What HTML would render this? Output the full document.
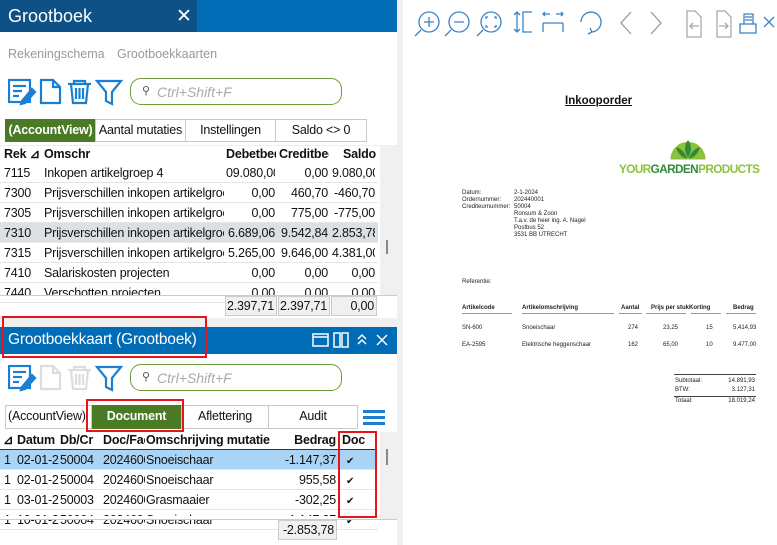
<!DOCTYPE html>
<html><head><meta charset="utf-8"><style>
*{margin:0;padding:0;box-sizing:border-box}
body{width:777px;height:545px;overflow:hidden;background:#fff;font-family:"Liberation Sans",sans-serif;position:relative;font-size:12px;color:#111}
.a{position:absolute;white-space:nowrap}
.cell{position:absolute;white-space:nowrap;overflow:hidden;font-size:12.5px;letter-spacing:-0.2px;line-height:20px}
.r{text-align:right}
.tab{position:absolute;border:1px solid #c8c8c8;background:#fff;text-align:center;font-size:12.5px;letter-spacing:-0.2px;line-height:21px;white-space:nowrap;overflow:hidden}
.red{position:absolute;border:2px solid #e8141b}
.s{font-size:6px;color:#222}
</style></head><body>
<div class="a" style="left:0;top:0;width:397px;height:32px;background:#006cb6"></div>
<div class="a" style="left:0;top:0;width:197px;height:32px;background:#0d5186"></div>
<div class="a" style="left:8px;top:6px;font-size:18px;color:#fff">Grootboek</div>
<div class="a" style="left:176px;top:5px;font-size:19px;color:#fff">✕</div>
<div class="a" style="left:8px;top:47px;font-size:12.5px;color:#999">Rekeningschema</div>
<div class="a" style="left:117px;top:47px;font-size:12.5px;color:#999">Grootboekkaarten</div>

<svg class="a" style="left:8px;top:78px" width="120" height="28" viewBox="0 0 120 28" fill="none" stroke="#1a7fd4" stroke-width="2.2">
<rect x="1" y="2" width="21" height="22"/><line x1="5" y1="8" x2="18" y2="8"/><line x1="5" y1="13" x2="14" y2="13"/><line x1="5" y1="18" x2="11" y2="18"/><path d="M14 23 L24 11 L27 14 L17 25 L13 26Z" fill="#1a7fd4"/>
<path d="M33 2 H45 L52 9 V25 H33Z"/><path d="M45 2 V9 H52"/>
<path d="M60 6 H83 M66 6 V3 H77 V6 M63 6 L65 25 H78 L80 6 M68 10 V21 M71.5 10 V21 M75 10 V21"/>
<path d="M89 3 H113 L104 14 V26 L98 23 V14Z"/>
</svg>
<div class="a" style="left:130px;top:78px;width:212px;height:27px;border:1.5px solid #6f9a3a;border-radius:11px"></div>
<div class="a" style="left:142px;top:84px;font-size:11px;color:#555">&#9906;</div>
<div class="a" style="left:157px;top:84px;font-size:14px;font-style:italic;color:#aaa">Ctrl+Shift+F</div>

<div class="tab" style="left:5px;top:119px;width:91px;height:23px;background:#4a7a23;color:#fff;font-weight:bold;border-color:#4a7a23">(AccountView)</div>
<div class="tab" style="left:95px;top:119px;width:91px;height:23px">Aantal mutaties</div>
<div class="tab" style="left:185px;top:119px;width:91px;height:23px">Instellingen</div>
<div class="tab" style="left:275px;top:119px;width:92px;height:23px">Saldo &lt;&gt; 0</div>

<div class="a" style="left:0;top:145px;width:397px;height:1px;background:#eee"></div>
<div class="a" style="left:380px;top:146px;width:17px;height:150px;background:#f0f0f0"></div>
<div class="a" style="left:386px;top:240px;width:2px;height:14px;background:#888"></div>
<div class="a" style="left:0;top:223px;width:378px;height:20px;background:#dcdfe3"></div>
<div id="g1"></div>
<div class="a" style="left:0;top:295px;width:397px;height:1px;background:#ccc"></div>
<div class="a" style="left:225px;top:296px;width:52px;height:20px;background:#f0f0f0;border:1px solid #ccc"></div>
<div class="a" style="left:278px;top:296px;width:52px;height:20px;background:#f0f0f0;border:1px solid #ccc"></div>
<div class="a" style="left:331px;top:296px;width:46px;height:20px;background:#f0f0f0;border:1px solid #ccc"></div>
<div class="cell r" style="left:226px;top:296px;width:48px">2.397,71</div>
<div class="cell r" style="left:279px;top:296px;width:48px">2.397,71</div>
<div class="cell r" style="left:332px;top:296px;width:42px">0,00</div>
<div class="a" style="left:0;top:318px;width:397px;height:9px;background:#f0f0f0"></div>

<div class="a" style="left:0;top:327px;width:397px;height:27px;background:#006cb6"></div>
<div class="a" style="left:8px;top:331px;font-size:15.5px;letter-spacing:-0.2px;color:#fff">Grootboekkaart (Grootboek)</div>
<svg class="a" style="left:311px;top:330px" width="86" height="20" viewBox="0 0 86 20" fill="none" stroke="#fff" stroke-width="1.5">
<rect x="2" y="4" width="15" height="12"/><line x1="2" y1="7" x2="17" y2="7"/>
<rect x="23" y="3" width="6" height="14"/><rect x="31" y="3" width="6" height="14"/>
<path d="M47 9 L51 5 L55 9 M47 14 L51 10 L55 14"/>
<path d="M66 5 L76 15 M76 5 L66 15"/>
</svg>
<div class="red" style="left:2px;top:316px;width:205px;height:42px"></div>
<svg class="a" style="left:8px;top:364px" width="120" height="28" viewBox="0 0 120 28" fill="none" stroke-width="2.2">
<g stroke="#1a7fd4"><rect x="1" y="2" width="21" height="22"/><line x1="5" y1="8" x2="18" y2="8"/><line x1="5" y1="13" x2="14" y2="13"/><line x1="5" y1="18" x2="11" y2="18"/><path d="M14 23 L24 11 L27 14 L17 25 L13 26Z" fill="#1a7fd4"/></g>
<g stroke="#ddd"><path d="M33 2 H45 L52 9 V25 H33Z"/><path d="M45 2 V9 H52"/>
<path d="M60 6 H83 M66 6 V3 H77 V6 M63 6 L65 25 H78 L80 6 M68 10 V21 M71.5 10 V21 M75 10 V21"/></g>
<path stroke="#1a7fd4" d="M89 3 H113 L104 14 V26 L98 23 V14Z"/>
</svg>
<div class="a" style="left:130px;top:364px;width:212px;height:27px;border:1.5px solid #6f9a3a;border-radius:11px"></div>
<div class="a" style="left:142px;top:370px;font-size:11px;color:#555">&#9906;</div>
<div class="a" style="left:157px;top:370px;font-size:14px;font-style:italic;color:#aaa">Ctrl+Shift+F</div>

<div class="tab" style="left:5px;top:405px;width:87px;height:24px;text-align:left;padding-left:2px">(AccountView)</div>
<div class="tab" style="left:92px;top:405px;width:89px;height:24px;background:#4a7a23;color:#fff;font-weight:bold;border-color:#4a7a23">Document</div>
<div class="tab" style="left:181px;top:405px;width:88px;height:24px">Aflettering</div>
<div class="tab" style="left:268px;top:405px;width:90px;height:24px">Audit</div>
<div class="red" style="left:86px;top:399px;width:98px;height:33px"></div>
<div class="a" style="left:363px;top:410px;width:22px;height:3px;background:#1a7fd4"></div>
<div class="a" style="left:363px;top:416px;width:22px;height:3px;background:#1a7fd4"></div>
<div class="a" style="left:363px;top:422px;width:22px;height:3px;background:#1a7fd4"></div>

<div class="a" style="left:380px;top:432px;width:17px;height:88px;background:#f0f0f0"></div>
<div class="a" style="left:386px;top:449px;width:2px;height:16px;background:#888"></div>
<div class="a" style="left:0;top:450px;width:376px;height:20px;background:#aad4f5"></div>
<div class="a" style="left:0;top:449px;width:376px;height:1px;background:#333"></div>
<div id="g2"></div>
<div class="a" style="left:0;top:519px;width:397px;height:1px;background:#ccc"></div>
<div class="a" style="left:278px;top:520px;width:59px;height:20px;background:#f0f0f0;border:1px solid #ccc"></div>
<div class="cell r" style="left:279px;top:520px;width:55px">-2.853,78</div>
<div class="red" style="left:338px;top:431px;width:39px;height:87px"></div>

<div class="a" style="left:397px;top:0;width:6px;height:545px;background:#f0f0f0"></div>

<svg class="a" style="left:414px;top:8px" width="363" height="30" viewBox="0 0 363 30" fill="none" stroke="#3a82c4" stroke-width="1.3">
<circle cx="15" cy="14" r="10"/><path d="M7 22 L1 28 M10 14 H20 M15 9 V19"/>
<circle cx="45" cy="14" r="10"/><path d="M37 22 L31 28 M40 14 H50"/>
<circle cx="77" cy="14" r="10"/><path d="M69 22 L63 28 M72 11 V9 H74 M80 9 H82 V11 M82 17 V19 H80 M74 19 H72 V17"/>
<path d="M103 4 V24 M100 7 L103 4 L106 7 M100 21 L103 24 L106 21 M118 4 H109 V24 H118"/>
<path d="M129 15 V24 M149 15 V24 M129 15 H149 M129 6 H136 M142 6 H149 M131 4 L129 6 L131 8 M147 4 L149 6 L147 8"/>
<path d="M178 24 A10 10 0 1 0 167 14 M176 20 L178 24 L174 26" />
<path stroke="#999" d="M217 4 L207 15 L217 26 M237 4 L247 15 L237 26"/>
<path stroke="#aaa" d="M273 3 H281 L287 9 V29 H273Z M285 18 H277 M279 15 L276 18 L279 21"/>
<path stroke="#aaa" d="M303 3 H311 L317 9 V29 H303Z M305 18 H313 M311 15 L314 18 L311 21"/>
<path d="M326 16 H342 V25 H326Z M330 16 V6 H339 V16 M331 9 H338 M331 12 H338"/>
<path d="M350 9 L360 19 M360 9 L350 19"/>
</svg>

<div class="a" style="left:565px;top:95px;font-size:11.5px;font-weight:bold;text-decoration:underline">Inkooporder</div>
<svg class="a" style="left:666px;top:134px" width="44" height="28" viewBox="0 0 50 30"><path d="M5 28 A20 20 0 0 1 45 28Z" fill="#8cc23b"/><path d="M25 6 C20 12 21 20 25 26 C29 20 30 12 25 6Z M12 14 C12 20 18 26 24 27 C22 21 18 16 12 14Z M38 14 C38 20 32 26 26 27 C28 21 32 16 38 14Z" fill="#2f8a3a"/></svg>
<div class="a" style="left:619px;top:162px;font-size:12px;font-weight:bold;letter-spacing:-0.6px;color:#8cc23b;transform:scaleX(0.98);transform-origin:left">YOUR<span style="color:#2f8a3a">GARDEN</span>PRODUCTS</div>
<div class="a s" style="left:462px;top:190px;line-height:7px">Datum:<br>Ordernummer:<br>Crediteurnummer:</div>
<div class="a s" style="left:514px;top:190px;line-height:7px">2-1-2024<br>202440001<br>50004<br>Ronsum &amp; Zoon<br>T.a.v. de heer ing. A. Nagel<br>Postbus 52<br>3531 BB UTRECHT</div>
<div class="a s" style="left:462px;top:279px">Referentie:</div>
<div class="a s" style="left:462px;top:305px;font-weight:bold">Artikelcode</div>
<div class="a s" style="left:522px;top:305px;font-weight:bold">Artikelomschrijving</div>
<div class="a s" style="left:621px;top:305px;font-weight:bold">Aantal</div>
<div class="a s" style="left:651px;top:305px;font-weight:bold">Prijs per stukKorting</div>
<div class="a s" style="left:733px;top:305px;font-weight:bold">Bedrag</div>
<div class="a" style="left:462px;top:313px;width:50px;height:1px;background:#999"></div>
<div class="a" style="left:522px;top:313px;width:92px;height:1px;background:#999"></div>
<div class="a" style="left:619px;top:313px;width:23px;height:1px;background:#999"></div>
<div class="a" style="left:646px;top:313px;width:40px;height:1px;background:#999"></div>
<div class="a" style="left:691px;top:313px;width:30px;height:1px;background:#999"></div>
<div class="a" style="left:726px;top:313px;width:30px;height:1px;background:#999"></div>
<div class="a s" style="left:462px;top:325px">SN-600</div><div class="a s" style="left:522px;top:325px">Snoeischaar</div><div class="a s" style="left:628px;top:325px">274</div><div class="a s" style="left:663px;top:325px">23,25</div><div class="a s" style="left:706px;top:325px">15</div><div class="a s" style="left:733px;top:325px">5.414,93</div>
<div class="a s" style="left:462px;top:342px">EA-2595</div><div class="a s" style="left:522px;top:342px">Elektrische heggenschaar</div><div class="a s" style="left:628px;top:342px">162</div><div class="a s" style="left:663px;top:342px">65,00</div><div class="a s" style="left:706px;top:342px">10</div><div class="a s" style="left:733px;top:342px">9.477,00</div>
<div class="a" style="left:674px;top:374px;width:82px;height:1px;background:#444"></div>
<div class="a s" style="left:675px;top:377px;line-height:9px">Subtotaal:<br>BTW:</div>
<div class="a s r" style="left:715px;top:377px;width:40px;line-height:9px">14.891,93<br>3.127,31</div>
<div class="a" style="left:674px;top:396px;width:82px;height:1px;background:#444"></div>
<div class="a s" style="left:675px;top:398px">Totaal:</div>
<div class="a s r" style="left:715px;top:398px;width:40px">18.019,24</div>

<script>
function row(par,top,cells,bold){var h='';cells.forEach(function(c){h+='<div class="cell'+(c[3]?' r':'')+'" style="left:'+c[0]+'px;top:'+top+'px;width:'+c[1]+'px;'+(bold?'font-weight:bold;':'')+'">'+c[2]+'</div>';});par.insertAdjacentHTML('beforeend',h);}
var g1=document.getElementById('g1');
row(g1,144,[[4,36,'Rek ⊿'],[44,180,'Omschr'],[226,50,'Debetbedrag'],[279,50,'Creditbedrag'],[332,44,'Saldo',1]],1);
var d=[['7115','Inkopen artikelgroep 4','09.080,00','0,00','9.080,00'],['7300','Prijsverschillen inkopen artikelgroep','0,00','460,70','-460,70'],['7305','Prijsverschillen inkopen artikelgroep','0,00','775,00','-775,00'],['7310','Prijsverschillen inkopen artikelgroep','6.689,06','9.542,84','2.853,78'],['7315','Prijsverschillen inkopen artikelgroep','5.265,00','9.646,00','4.381,00'],['7410','Salariskosten projecten','0,00','0,00','0,00'],['7440','Verschotten projecten','0,00','0,00','0,00']];
d.forEach(function(r,i){var t=163+i*20;row(g1,t,[[4,36,r[0]],[44,180,r[1]],[226,49,r[2],1],[279,49,r[3],1],[332,43,r[4],1]]);
g1.insertAdjacentHTML('beforeend','<div class="a" style="left:0;top:'+(t+19)+'px;width:378px;height:1px;background:#e6e6e6"></div>');});
g1.insertAdjacentHTML('beforeend','<div class="a" style="left:0;top:296px;width:380px;height:6px;background:#fff"></div>');
var g2=document.getElementById('g2');
row(g2,430,[[3,12,'⊿'],[17,42,'Datum ⊿'],[60,42,'Db/Cr'],[103,42,'Doc/Factuur'],[146,130,'Omschrijving mutatie'],[280,56,'Bedrag',1],[342,30,'Doc']],1);
var e=[['02-01-2','50004','Snoeischaar','-1.147,37'],['02-01-2','50004','Snoeischaar','955,58'],['03-01-2','50003','Grasmaaier','-302,25'],['10-01-2','50004','Snoeischaar','1.147,37']];
e.forEach(function(r,i){var t=450+i*20;row(g2,t,[[4,10,'1'],[17,42,r[0]],[60,42,r[1]],[103,42,'202460001'],[146,130,r[2]],[280,56,r[3],1],[346,15,'<span style="font-size:10px">✔</span>']]);
g2.insertAdjacentHTML('beforeend','<div class="a" style="left:0;top:'+(t+19)+'px;width:378px;height:1px;background:#e6e6e6"></div>');});
g2.insertAdjacentHTML('beforeend','<div class="a" style="left:0;top:516px;width:380px;height:3px;background:#fff"></div>');
</script>
</body></html>
